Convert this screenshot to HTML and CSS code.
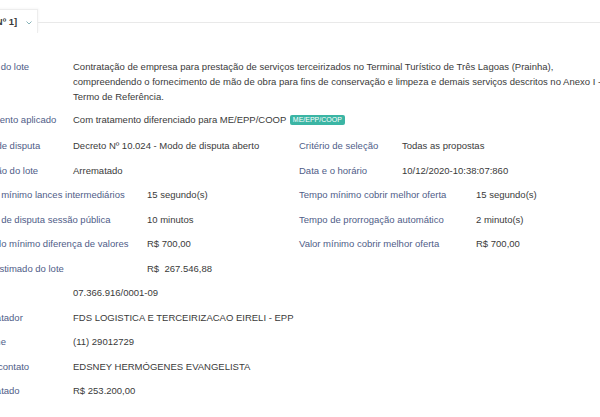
FILE: index.html
```html
<!DOCTYPE html>
<html>
<head>
    <meta charset="UTF-8">
    <title>Lote</title>
    <link rel="stylesheet" href="styles.css">
</head>
<body>

<div class="page">
    <div class="tabs">
        <div class="tab">Lote [Nº 1]
            <svg class="chev" width="6" height="4" viewBox="0 0 6 4"><polyline points="0.5,0.5 3,3 5.5,0.5" fill="none" stroke="#86b3b8" stroke-width="1"/></svg>
        </div>
        <div class="tab_line"></div>
    </div>

    <div class="details">
        <div class="field full">
            <div class="lbl">Objeto do lote</div>
            <div class="val desc">Contratação de empresa para prestação de serviços terceirizados no Terminal Turístico de Três Lagoas (Prainha), compreendendo o fornecimento de mão de obra para fins de conservação e limpeza e demais serviços descritos no Anexo I - Termo de Referência.</div>
        </div>
        <div class="field full tight">
            <div class="lbl">Tratamento aplicado</div>
            <div class="val">Com tratamento diferenciado para ME/EPP/COOP <span class="badge">ME/EPP/COOP</span></div>
        </div>

        <div class="field">
            <div class="lbl">Modo de disputa</div>
            <div class="val">Decreto Nº 10.024 - Modo de disputa aberto</div>
        </div>
        <div class="field">
            <div class="lbl">Critério de seleção</div>
            <div class="val">Todas as propostas</div>
        </div>

        <div class="field">
            <div class="lbl">Situação do lote</div>
            <div class="val">Arrematado</div>
        </div>
        <div class="field">
            <div class="lbl">Data e o horário</div>
            <div class="val">10/12/2020-10:38:07:860</div>
        </div>

        <div class="field wide">
            <div class="lbl">Tempo mínimo lances intermediários</div>
            <div class="val">15 segundo(s)</div>
        </div>
        <div class="field wide">
            <div class="lbl">Tempo mínimo cobrir melhor oferta</div>
            <div class="val">15 segundo(s)</div>
        </div>

        <div class="field wide">
            <div class="lbl">Tempo de disputa sessão pública</div>
            <div class="val">10 minutos</div>
        </div>
        <div class="field wide">
            <div class="lbl">Tempo de prorrogação automático</div>
            <div class="val">2 minuto(s)</div>
        </div>

        <div class="field wide">
            <div class="lbl">Intervalo mínimo diferença de valores</div>
            <div class="val">R$ 700,00</div>
        </div>
        <div class="field wide">
            <div class="lbl">Valor mínimo cobrir melhor oferta</div>
            <div class="val">R$ 700,00</div>
        </div>

        <div class="field wide full">
            <div class="lbl">Valor estimado do lote</div>
            <div class="val">R$&nbsp; 267.546,88</div>
        </div>

        <div class="field full">
            <div class="lbl">CNPJ</div>
            <div class="val">07.366.916/0001-09</div>
        </div>
        <div class="field full">
            <div class="lbl">Arrematador</div>
            <div class="val">FDS LOGISTICA E TERCEIRIZACAO EIRELI - EPP</div>
        </div>
        <div class="field full">
            <div class="lbl">Telefone</div>
            <div class="val">(11) 29012729</div>
        </div>
        <div class="field full">
            <div class="lbl">Nome contato</div>
            <div class="val">EDSNEY HERMÓGENES EVANGELISTA</div>
        </div>
        <div class="field full">
            <div class="lbl">Arrematado</div>
            <div class="val">R$ 253.200,00</div>
        </div>
    </div>
</div>

</body>
</html>
```

FILE: styles.css
```css
*{
    margin: 0;
    padding: 0;
    box-sizing: border-box;
}
body{
    background: #fff;
    font-family: "Liberation Sans", Arial, sans-serif;
    font-size: 9.5px;
    color: #3a3a3a;
    overflow: hidden;
}
.page{
    width: 640px;
    margin-left: -30px;
}
.tabs{
    display: flex;
    align-items: center;
    margin-top: 9px;
}
.tab{
    flex: none;
    width: 68px;
    height: 24px;
    line-height: 24px;
    padding-right: 6px;
    text-align: right;
    font-size: 9.5px;
    font-weight: bold;
    color: #3a3a3a;
    white-space: nowrap;
    background: #fff;
    border: 1px solid #ededed;
    border-left: none;
    border-bottom: none;
    box-shadow: 1px -1px 2px rgba(0,0,0,0.03);
}
.chev{
    margin-left: 6px;
    vertical-align: 0;
}
.tab_line{
    flex: 1;
    height: 1px;
    margin-top: 2px;
    background: #e9e9e9;
}
.details{
    display: grid;
    grid-template-columns: 329px 1fr;
    row-gap: 9.5px;
    margin-top: 26px;
    line-height: 15px;
}
.field{
    display: flex;
    white-space: nowrap;
}
.field.full{
    grid-column: 1 / 3;
}
.field.tight{
    margin: -2px 0 2px;
}
.lbl{
    flex: none;
    width: 103px;
    color: #4f5d88;
}
.wide .lbl{
    width: 177px;
}
.val{
    color: #3a3a3a;
}
.desc{
    white-space: normal;
    width: 535px;
}
.badge{
    display: inline-block;
    margin-left: 1px;
    padding: 0 3px;
    height: 10px;
    line-height: 10px;
    font-size: 7px;
    color: #fff;
    background: #3bb5a4;
    border-radius: 2px;
    vertical-align: 1px;
}
```
